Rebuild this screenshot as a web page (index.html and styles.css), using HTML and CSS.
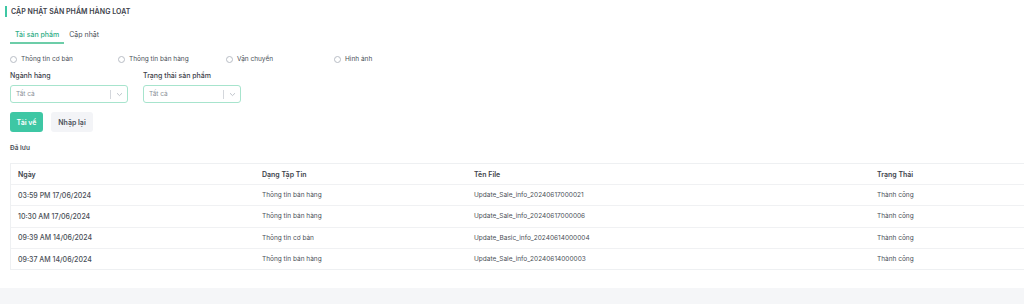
FILE: index.html
```html
<!DOCTYPE html>
<html lang="vi">
<head>
<meta charset="utf-8">
<link rel="stylesheet" href="styles.css">
</head>
<body>
<div class="page">
  <div class="card">
    <div class="title">CẬP NHẬT SẢN PHẨM HÀNG LOẠT</div>
    <div class="tabs">
      <div class="tab active">Tải sản phẩm</div>
      <div class="tab">Cập nhật</div>
    </div>
    <div class="radios">
      <label class="radio"><span class="dot"></span>Thông tin cơ bản</label>
      <label class="radio"><span class="dot"></span>Thông tin bán hàng</label>
      <label class="radio"><span class="dot"></span>Vận chuyển</label>
      <label class="radio"><span class="dot"></span>Hình ảnh</label>
    </div>
    <div class="filters">
      <div class="field f1">
        <div class="label">Ngành hàng</div>
        <div class="select"><span class="val">Tất cả</span><span class="sep"></span><svg class="chev" width="7" height="5" viewBox="0 0 7 5"><path d="M1 1.2 L3.5 3.6 L6 1.2" fill="none" stroke="#b9bec6" stroke-width="0.9"/></svg></div>
      </div>
      <div class="field f2">
        <div class="label">Trạng thái sản phẩm</div>
        <div class="select"><span class="val">Tất cả</span><span class="sep"></span><svg class="chev" width="7" height="5" viewBox="0 0 7 5"><path d="M1 1.2 L3.5 3.6 L6 1.2" fill="none" stroke="#b9bec6" stroke-width="0.9"/></svg></div>
      </div>
    </div>
    <div class="buttons">
      <button class="btn primary">Tải về</button>
      <button class="btn ghost">Nhập lại</button>
    </div>
    <div class="saved">Đã lưu</div>
    <div class="table">
      <div class="row head">
        <div class="c c1">Ngày</div><div class="c c2">Dạng Tập Tin</div><div class="c c3">Tên File</div><div class="c c4">Trạng Thái</div>
      </div>
      <div class="row">
        <div class="c c1 date">03:59 PM 17/06/2024</div><div class="c c2">Thông tin bán hàng</div><div class="c c3">Update_Sale_info_20240617000021</div><div class="c c4">Thành công</div>
      </div>
      <div class="row">
        <div class="c c1 date">10:30 AM 17/06/2024</div><div class="c c2">Thông tin bán hàng</div><div class="c c3">Update_Sale_info_20240617000006</div><div class="c c4">Thành công</div>
      </div>
      <div class="row">
        <div class="c c1 date">09:39 AM 14/06/2024</div><div class="c c2">Thông tin cơ bản</div><div class="c c3">Update_Basic_info_20240614000004</div><div class="c c4">Thành công</div>
      </div>
      <div class="row">
        <div class="c c1 date">09:37 AM 14/06/2024</div><div class="c c2">Thông tin bán hàng</div><div class="c c3">Update_Sale_info_20240614000003</div><div class="c c4">Thành công</div>
      </div>
    </div>
  </div>
  <div class="footer"></div>
</div>
</body>
</html>
```
FILE: styles.css
```css
* { box-sizing: border-box; }
html, body { margin: 0; padding: 0; background: #fff; }
body {
  font-family: Inter, "Noto Sans", sans-serif;
  font-size: 7px;
  color: #4a4f57;
  width: 1024px;
  height: 304px;
  overflow: hidden;
}
.page { width: 1024px; }
.card {
  height: 288px;
  padding: 6px 0 0 10px;
  background: #fff;
}
.title {
  font-size: 7px;
  font-weight: 600;
  color: #3d424a;
  height: 11px;
  line-height: 11px;
  border-left: 2px solid #3ec7a4;
  margin-left: -5px;
  padding-left: 4px;
  letter-spacing: 0.05px;
}
.tabs {
  display: flex;
  margin-top: 10px;
  height: 17px;
}
.tab {
  padding: 0 5px;
  line-height: 15px;
  color: #4a4f57;
  white-space: nowrap;
}
.tab.active {
  color: #2fae86;
  font-weight: 500;
  border-bottom: 2px solid #6ccda8;
}
.radios {
  display: flex;
  margin-top: 8px;
  height: 14px;
  align-items: center;
}
.radio {
  display: flex;
  align-items: center;
  width: 108px;
  color: #4a4f57;
  font-size: 6.5px;
  white-space: nowrap;
}
.dot {
  width: 7px; height: 7px;
  border: 0.8px solid #b8bdc5;
  border-radius: 50%;
  margin-right: 4px;
  display: inline-block;
}
.filters {
  display: flex;
  gap: 15px;
  margin-top: 4px;
}
.label {
  font-size: 7px;
  font-weight: 500;
  color: #3d424a;
  height: 11px;
  line-height: 11px;
  margin-bottom: 4px;
}
.select {
  display: flex;
  align-items: center;
  height: 18px;
  border: 1px solid #a7e4cd;
  border-radius: 3px;
  padding-left: 5px;
  color: #8a9099;
}
.f1 .select { width: 118px; }
.f2 .select { width: 98px; }
.val { flex: 1; font-size: 6.5px; }
.sep { width: 1px; height: 9px; background: #d4d7dc; margin-right: 5px; }
.chev { margin-right: 4px; }
.buttons {
  display: flex;
  gap: 8px;
  margin-top: 9px;
}
.btn {
  font-family: inherit;
  font-size: 7px;
  font-weight: 600;
  height: 20px;
  border: none;
  border-radius: 3px;
  padding: 0;
}
.primary { background: #3ec7a4; color: #fff; width: 33px; }
.ghost { background: #f3f4f7; color: #4a4f57; width: 42px; }
.saved {
  margin-top: 11px;
  height: 10px;
  line-height: 10px;
  font-weight: 600;
  color: #4a4f57;
  font-size: 6.5px;
}
.table {
  margin-top: 10px;
  width: 1030px;
  border: 1px solid #eef0f2;
  border-right: none;
}
.row {
  display: flex;
  height: 21.3px;
  align-items: center;
  border-top: 1px solid #f0f1f3;
}
.row.head { border-top: none; height: 20px; font-weight: 600; color: #3d424a; }
.c { padding-left: 7px; white-space: nowrap; }
.c1 { width: 244px; }
.c2 { width: 212px; font-size: 6.5px; }
.c3 { width: 403px; font-size: 6.5px; }
.c4 { font-size: 6.5px; }
.row.head .c { font-size: 7px; }
.date { font-weight: 500; color: #4a4f57; }
.footer {
  height: 16px;
  background: #f5f6f8;
}
```
